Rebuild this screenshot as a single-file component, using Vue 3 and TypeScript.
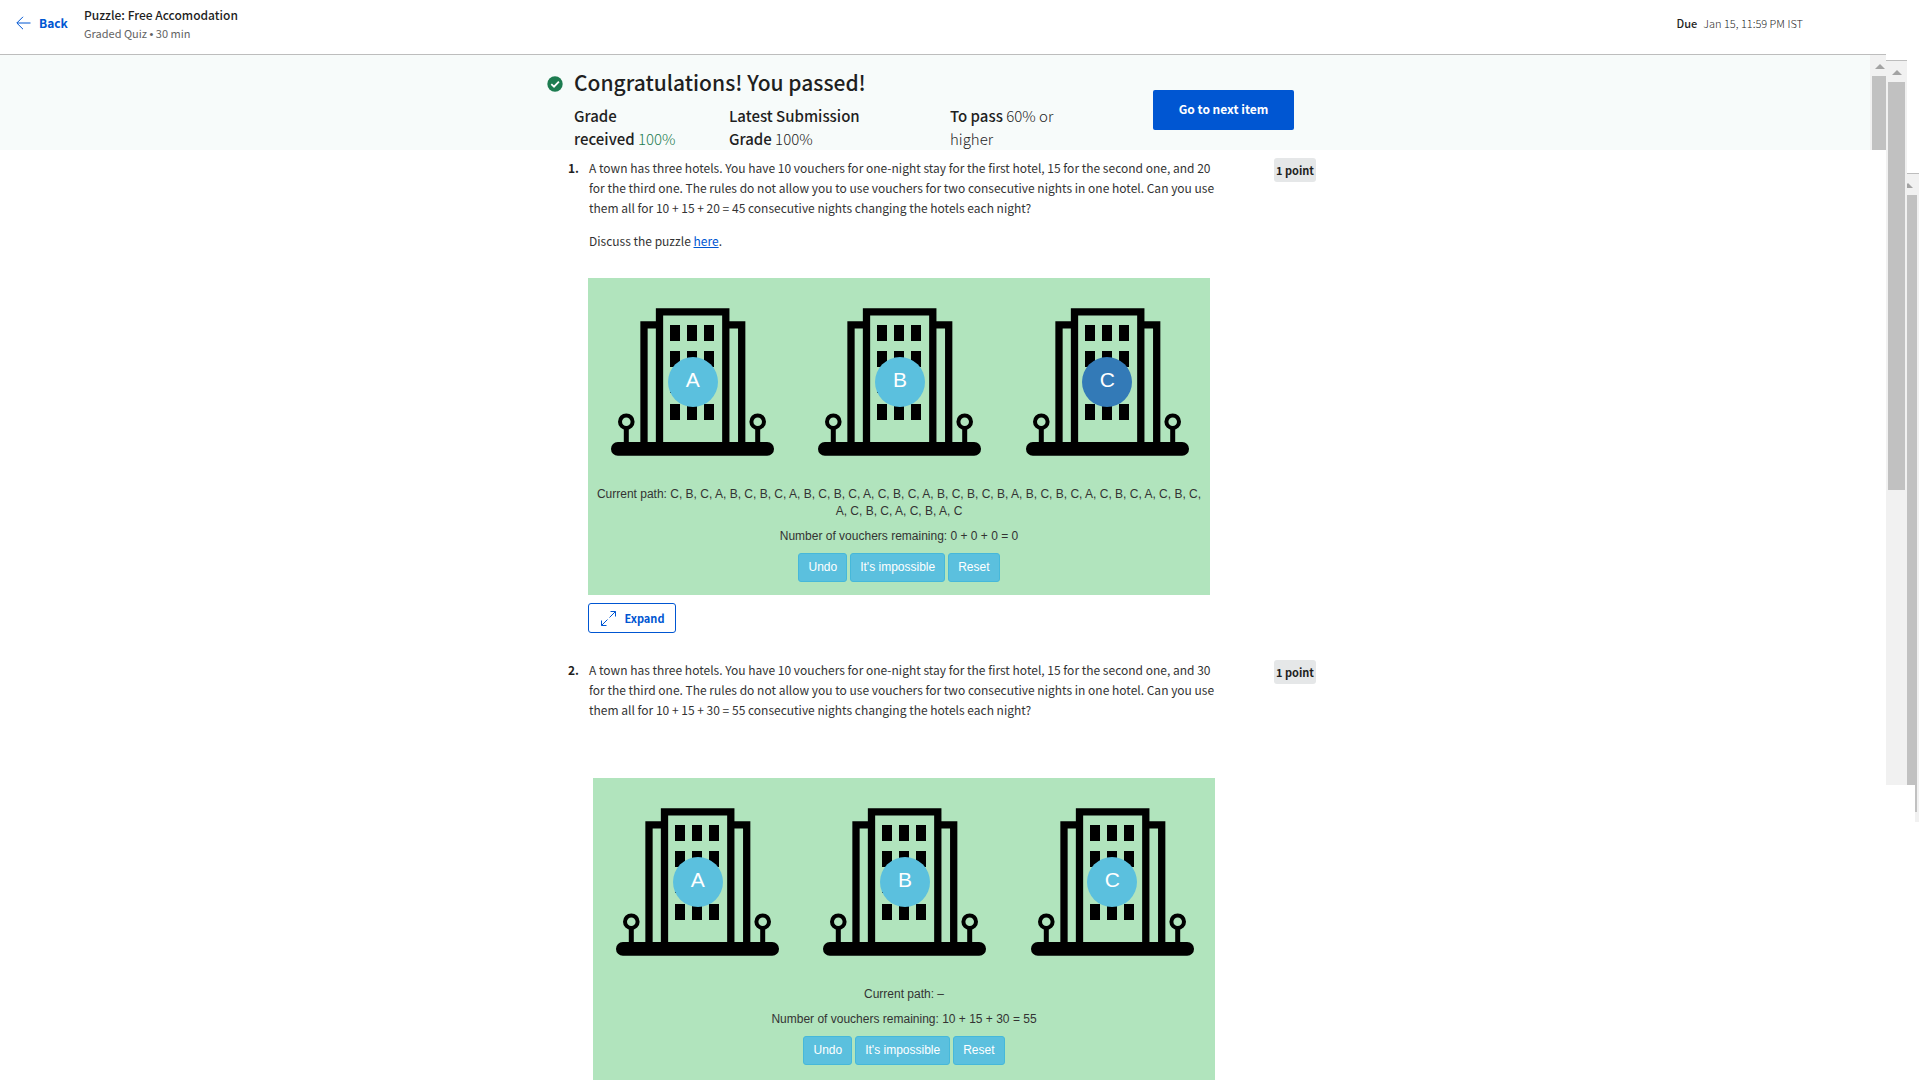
<script setup lang="ts">
interface Question {
  id: number
  vouchers: [number, number, number]
  remaining: [number, number, number]
  discuss: boolean
  expandable: boolean
  path: string
  selected: string
}

const questions: Question[] = [
  {
    id: 1,
    vouchers: [10, 15, 20],
    remaining: [0, 0, 0],
    discuss: true,
    expandable: true,
    path: 'C, B, C, A, B, C, B, C, A, B, C, B, C, A, C, B, C, A, B, C, B, C, B, A, B, C, B, C, A, C, B, C, A, C, B, C, A, C, B, C, A, C, B, A, C',
    selected: 'C',
  },
  {
    id: 2,
    vouchers: [10, 15, 30],
    remaining: [10, 15, 30],
    discuss: false,
    expandable: false,
    path: '–',
    selected: '',
  },
]

const hotels = ['A', 'B', 'C']
const windowColumns = [59, 76, 93]
const windowRows = [17, 43, 69, 96]

const total = (values: number[]): number => values.reduce((sum, n) => sum + n, 0)
</script>

<template>
  <div class="page">
    <div class="main">
      <header class="topbar">
        <a class="back" href="#">
          <svg width="15" height="14" viewBox="0 0 15 14" fill="none" stroke="currentColor" aria-hidden="true">
            <path d="M14.500 7H1M7 .8L.8 7L7 13.200" />
          </svg>
          Back
        </a>
        <div class="heading">
          <h1>Puzzle: Free Accomodation</h1>
          <p>Graded Quiz <span class="dot">•</span> 30 min</p>
        </div>
        <div class="due"><strong>Due</strong><span>Jan 15, 11:59 PM IST</span></div>
      </header>

      <section class="banner">
        <div class="result">
          <svg class="check" width="16" height="16" viewBox="0 0 16 16" aria-hidden="true">
            <circle cx="8" cy="8" r="7.700" fill="#1d7c50" />
            <path d="M4.300 8.200L7 10.700L11.900 5.600" fill="none" stroke="#fff" stroke-width="1.800" />
          </svg>
          <div class="summary">
            <h2>Congratulations! You passed!</h2>
            <div class="grades">
              <p class="received"><strong>Grade<br />received</strong> <span class="passed">100%</span></p>
              <p class="latest"><strong>Latest Submission<br />Grade</strong> 100%</p>
              <p class="needed"><strong>To pass</strong> 60% or<br />higher</p>
            </div>
          </div>
          <button class="next" type="button">Go to next item</button>
        </div>
        <div class="rail rail-banner" aria-hidden="true">
          <i class="arrow"></i>
          <i class="thumb"></i>
        </div>
      </section>

      <main class="questions">
        <article v-for="q in questions" :key="q.id" class="question" :class="{ plain: !q.discuss }">
          <span class="number">{{ q.id }}.</span>
          <div class="body">
            <div class="prompt">
              <p>
                A town has three hotels. You have {{ q.vouchers[0] }} vouchers for one-night stay for the first hotel, {{ q.vouchers[1] }} for the second one, and {{ q.vouchers[2] }}<br />
                for the third one. The rules do not allow you to use vouchers for two consecutive nights in one hotel. Can you use<br />
                them all for {{ q.vouchers.join(' + ') }} = {{ total(q.vouchers) }} consecutive nights changing the hotels each night?
              </p>
              <p v-if="q.discuss">Discuss the puzzle <a href="#">here</a>.</p>
            </div>
            <div class="puzzle">
              <div class="hotels">
                <div v-for="name in hotels" :key="name" class="hotel">
                  <svg width="163" height="148" viewBox="0 0 163 148" aria-hidden="true">
                    <path d="M48.500 136V3.800H114.800V136" fill="none" stroke="#000" stroke-width="7.300" />
                    <path d="M33 136V16.800H48M115 16.800H130.700V136" fill="none" stroke="#000" stroke-width="7.300" />
                    <template v-for="y in windowRows" :key="y">
                      <rect v-for="x in windowColumns" :key="x" :x="x" :y="y" width="10" height="16" />
                    </template>
                    <g fill="none" stroke="#000">
                      <circle cx="15.300" cy="113.700" r="6.300" stroke-width="4" />
                      <circle cx="146.700" cy="113.700" r="6.300" stroke-width="4" />
                      <path d="M15.300 121V136M146.700 121V136" stroke-width="5" />
                    </g>
                    <rect x="0" y="134" width="163" height="13.700" rx="6.800" />
                  </svg>
                  <button class="pick" :class="{ chosen: name === q.selected }" type="button">{{ name }}</button>
                </div>
              </div>
              <p>Current path: {{ q.path }}</p>
              <p>Number of vouchers remaining: {{ q.remaining.join(' + ') }} = {{ total(q.remaining) }}</p>
              <div class="actions">
                <button type="button">Undo</button>
                <button type="button">It's impossible</button>
                <button type="button">Reset</button>
              </div>
            </div>
            <button v-if="q.expandable" class="expand" type="button">
              <svg width="15" height="15" viewBox="0 0 15 15" fill="none" stroke="currentColor" aria-hidden="true">
                <path d="M9.500 .5H14.500V5.500M14.500 .5L8.500 6.500M5.500 14.500H.5V9.500M.5 14.500L6.500 8.500" />
              </svg>
              Expand
            </button>
          </div>
          <span class="points">1 point</span>
        </article>
      </main>
    </div>

    <div class="rail rail-page" aria-hidden="true">
      <i class="arrow"></i>
      <i class="thumb"></i>
    </div>
    <div class="outer" aria-hidden="true">
      <div class="rail rail-outer">
        <i class="arrow"></i>
        <i class="thumb"></i>
      </div>
      <div class="rail rail-end"><i class="thumb"></i></div>
    </div>
  </div>
</template>

<style>
body {
  margin: 0;
  background: #fff;
}
</style>

<style scoped>
.page {
  display: flex;
  align-items: flex-start;
  height: 100vh;
  overflow: hidden;
  color: #1f1f1f;
  font-family: "Source Sans Pro", "Noto Sans CJK SC", sans-serif;
  font-size: 12px;
  line-height: 20px;
}
.page * {
  box-sizing: border-box;
}
h1,
h2,
p {
  margin: 0;
}
button {
  font: inherit;
  padding: 0;
  cursor: pointer;
}
.main {
  flex: 1;
  min-width: 0;
}

.topbar {
  display: flex;
  align-items: center;
  height: 55px;
  padding: 0 83px 6px 16px;
  border-bottom: 1px solid #bdbdbd;
}
.back {
  display: flex;
  align-items: center;
  gap: 8px;
  width: 68px;
  padding-bottom: 2px;
  color: #0056d2;
  font-weight: 700;
  text-decoration: none;
}
.heading {
  flex: 1;
  line-height: 18px;
}
.heading h1 {
  font-size: 12px;
  font-weight: 500;
}
.heading p {
  font-size: 11px;
  color: #636363;
}
.dot {
  font-family: "Liberation Sans", Arial, sans-serif;
}
.due {
  display: flex;
  gap: 6px;
  padding-bottom: 2px;
  font-size: 11px;
  font-weight: 300;
}
.due strong {
  font-weight: 500;
}

.banner {
  display: flex;
  height: 95px;
  overflow: hidden;
  background: #f7fbfa;
}
.result {
  flex: 1;
  display: flex;
  justify-content: center;
  align-items: flex-start;
  gap: 11px;
  padding: 11px 29px 0 0;
}
.check {
  margin-top: 10px;
}
.summary {
  width: 568px;
}
.summary h2 {
  font-size: 21px;
  line-height: 32px;
  font-weight: 500;
}
.grades {
  display: flex;
  margin-top: 6px;
  font-size: 15px;
  font-weight: 300;
  line-height: 23px;
}
.grades strong {
  font-weight: 500;
}
.received {
  width: 155px;
}
.latest {
  width: 221px;
}
.passed {
  color: #1d7c50;
}
.next {
  width: 141px;
  height: 40px;
  margin-top: 24px;
  padding-bottom: 2px;
  border: 0;
  border-radius: 2px;
  background: #0056d2;
  color: #fff;
  font-weight: 700;
}

.questions {
  display: flex;
  flex-direction: column;
  gap: 27px;
  padding: 8px 2px 0 0;
}
.question {
  display: flex;
  align-items: flex-start;
  width: 748px;
  margin: 0 auto;
}
.number {
  width: 21px;
  font-weight: 700;
}
.body {
  flex: 1;
}
.prompt {
  display: flex;
  flex-direction: column;
  gap: 13px;
  min-height: 120px;
  color: #333;
  white-space: nowrap;
}
.plain .prompt {
  min-height: 118px;
}
.prompt a {
  color: #0056d2;
}
.points {
  width: 42px;
  border-radius: 3px;
  background: #e5e7e8;
  font-size: 11px;
  font-weight: 700;
  line-height: 24px;
  text-align: center;
}

.puzzle {
  width: 622px;
  min-height: 317px;
  margin-left: -1px;
  padding: 30px 8px 13px;
  background: #b1e4bd;
  color: #333;
  font-family: "Liberation Sans", Arial, sans-serif;
  font-size: 12px;
  line-height: 17px;
  text-align: center;
}
.plain .puzzle {
  margin-left: 4px;
}
.puzzle p {
  margin-bottom: 8px;
}
.hotels {
  display: grid;
  grid-template-columns: repeat(3, 1fr);
  margin: 0 -9px 30px -7px;
}
.hotel {
  position: relative;
  height: 148px;
}
.pick {
  position: absolute;
  top: 49px;
  left: 50%;
  width: 50px;
  height: 50px;
  margin-left: -25px;
  padding-bottom: 6px;
  border: 0;
  border-radius: 50%;
  background: #5bc0de;
  color: #fff;
  font-size: 21px;
}
.pick.chosen {
  background: #337ab7;
}
.actions {
  display: flex;
  justify-content: center;
  gap: 3px;
}
.actions button {
  height: 29px;
  padding: 0 9px;
  border: 1px solid #46b8da;
  border-radius: 3px;
  background: #5bc0de;
  color: #fff;
}
.expand {
  display: flex;
  align-items: center;
  justify-content: center;
  gap: 8px;
  width: 88px;
  height: 30px;
  margin: 8px 0 0 -1px;
  padding-left: 2px;
  border: 1px solid #0056d2;
  border-radius: 3px;
  background: #fff;
  color: #0056d2;
  font-size: 11px;
  font-weight: 700;
}

.rail {
  display: flex;
  flex-direction: column;
  background: #f1f1f1;
}
.arrow {
  align-self: center;
  width: 0;
  height: 0;
  margin: 9px 0 7px;
  border: solid transparent;
  border-width: 0 5px 5px;
  border-bottom-color: #a3a3a3;
}
.thumb {
  background: #c1c1c1;
}
.rail-banner {
  width: 16px;
  padding-left: 2px;
}
.rail-banner .arrow {
  margin-left: 2px;
}
.rail-banner .thumb {
  flex: 1;
}
.rail-page {
  width: 21px;
  height: 725px;
  margin-top: 60px;
  padding: 0 2px;
  border-top: 1px solid #bdbdbd;
}
.rail-page .thumb {
  height: 408px;
}
.outer {
  display: flex;
  flex-direction: column;
  align-items: flex-end;
  width: 13px;
  margin-top: 173px;
  padding-right: 1px;
}
.rail-outer {
  width: 12px;
  height: 612px;
  overflow: hidden;
  padding-right: 2px;
  border-top: 1px solid #bdbdbd;
}
.rail-outer .arrow {
  align-self: flex-start;
  margin-left: -4px;
}
.rail-outer .thumb {
  flex: 1;
}
.rail-end {
  width: 4px;
  height: 37px;
}
.rail-end .thumb {
  width: 2px;
  height: 27px;
}
</style>
